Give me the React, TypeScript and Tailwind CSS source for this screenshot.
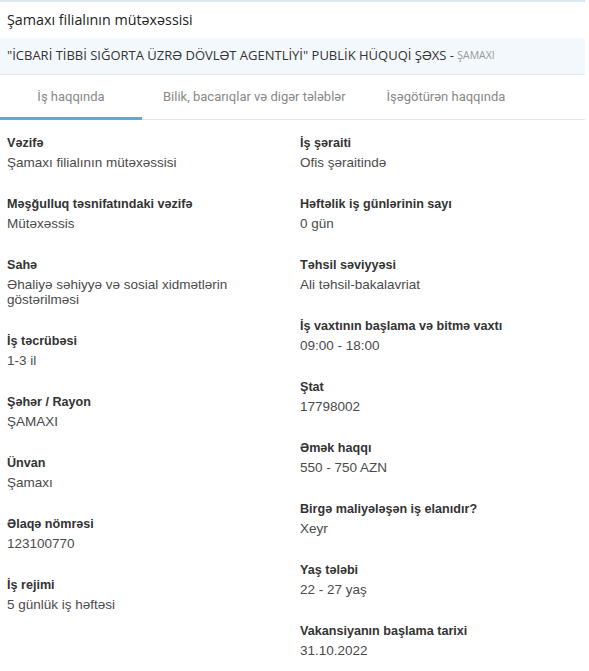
import React from "react";

interface Field {
  label: string;
  value: string[];
}

const leftFields: Field[] = [
  { label: "Vəzifə", value: ["Şamaxı filialının mütəxəssisi"] },
  { label: "Məşğulluq təsnifatındaki vəzifə", value: ["Mütəxəssis"] },
  { label: "Sahə", value: ["Əhaliyə səhiyyə və sosial xidmətlərin", "göstərilməsi"] },
  { label: "İş təcrübəsi", value: ["1-3 il"] },
  { label: "Şəhər / Rayon", value: ["ŞAMAXI"] },
  { label: "Ünvan", value: ["Şamaxı"] },
  { label: "Əlaqə nömrəsi", value: ["123100770"] },
  { label: "İş rejimi", value: ["5 günlük iş həftəsi"] },
];

const rightFields: Field[] = [
  { label: "İş şəraiti", value: ["Ofis şəraitində"] },
  { label: "Həftəlik iş günlərinin sayı", value: ["0 gün"] },
  { label: "Təhsil səviyyəsi", value: ["Ali təhsil-bakalavriat"] },
  { label: "İş vaxtının başlama və bitmə vaxtı", value: ["09:00 - 18:00"] },
  { label: "Ştat", value: ["17798002"] },
  { label: "Əmək haqqı", value: ["550 - 750 AZN"] },
  { label: "Birgə maliyələşən iş elanıdır?", value: ["Xeyr"] },
  { label: "Yaş tələbi", value: ["22 - 27 yaş"] },
  { label: "Vakansiyanın başlama tarixi", value: ["31.10.2022"] },
];

function FieldItem({ field }: { field: Field }) {
  return (
    <div className="mb-[25px]">
      <div className="text-[12.6px] font-bold leading-[18px] text-[#333]">
        {field.label}
      </div>
      <div className="mt-[3px] text-[13.5px] leading-[15px] text-[#4a4a4a]">
        {field.value.map((line) => (
          <div key={line}>{line}</div>
        ))}
      </div>
    </div>
  );
}

export default function App() {
  return (
    <div className="min-h-screen bg-white">
      <div className="w-[585px] border-t-2 border-[#dbe8f1] font-['Liberation_Sans',Arial,sans-serif]">
        {/* Title */}
        <div className="flex h-[36px] items-center px-[7px] font-['Open_Sans',sans-serif] text-[14.3px] text-[#222]">
          Şamaxı filialının mütəxəssisi
        </div>

        {/* Employer strip */}
        <div className="flex h-[37px] items-center border-b border-[#e3e6e8] bg-[#f3f8fc] px-[7px] font-['Open_Sans',sans-serif] text-[13px] text-[#333]">
          <span>"İCBARİ TİBBİ SIĞORTA ÜZRƏ DÖVLƏT AGENTLİYİ" PUBLİK HÜQUQİ ŞƏXS -&nbsp;</span>
          <span className="text-[10.5px] text-[#999]">ŞAMAXI</span>
        </div>

        {/* Tabs */}
        <div className="flex h-[45px] border-b border-[#e3e6e8] font-['Roboto',sans-serif] text-[13px] text-[#888]">
          <div className="relative flex w-[142px] items-center justify-center">
            İş haqqında
            <div className="absolute bottom-[-1px] left-0 right-0 h-[3px] bg-[#4db3c9]" />
          </div>
          <div className="flex items-center px-[21px]">
            Bilik, bacarıqlar və digər tələblər
          </div>
          <div className="flex items-center px-[20px]">İşəgötürən haqqında</div>
        </div>

        {/* Details */}
        <div className="flex pt-[14px]">
          <div className="w-[300px] pl-[7px]">
            {leftFields.map((f) => (
              <FieldItem key={f.label} field={f} />
            ))}
          </div>
          <div className="flex-1">
            {rightFields.map((f) => (
              <FieldItem key={f.label} field={f} />
            ))}
          </div>
        </div>
      </div>
    </div>
  );
}
